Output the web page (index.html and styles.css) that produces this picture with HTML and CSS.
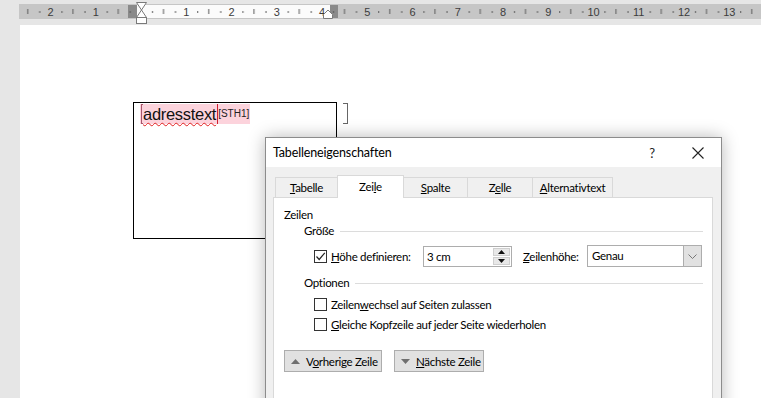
FILE: index.html
```html
<!DOCTYPE html>
<html lang="de">
<head>
    <meta charset="UTF-8">
    <title>Tabelleneigenschaften</title>
    <link rel="stylesheet" href="styles.css">
</head>
<body>
    <div class="ruler">
        <svg width="761" height="25" viewBox="0 0 761 25">
            <defs>
                <pattern id="ticks" x="141" y="0" width="45.25" height="25" patternUnits="userSpaceOnUse">
                    <rect x="11" y="11" width="1" height="2" fill="#5a5a5a"/>
                    <rect x="22" y="9" width="1" height="5" fill="#5a5a5a"/>
                    <rect x="34" y="11" width="1" height="2" fill="#5a5a5a"/>
                </pattern>
            </defs>
            <rect x="19" y="4" width="742" height="15" fill="#c6c6c6"/>
            <rect x="137" y="5" width="193" height="13" fill="#fbfbfb"/>
            <rect x="128" y="5" width="9" height="13" fill="#8a8a8a"/>
            <rect x="330" y="5" width="8" height="13" fill="#8a8a8a"/>
            <rect x="19" y="4" width="742" height="15" fill="url(#ticks)"/>
            <g class="nums" text-anchor="middle">
                <text x="50.5" y="16">2</text>
                <text x="95.75" y="16">1</text>
                <text x="186.25" y="16">1</text>
                <text x="231.5" y="16">2</text>
                <text x="276.75" y="16">3</text>
                <text x="322" y="16">4</text>
                <text x="367.25" y="16">5</text>
                <text x="412.5" y="16">6</text>
                <text x="457.75" y="16">7</text>
                <text x="503" y="16">8</text>
                <text x="548.25" y="16">9</text>
                <text x="593.5" y="16">10</text>
                <text x="638.75" y="16">11</text>
                <text x="684" y="16">12</text>
                <text x="729.25" y="16">13</text>
            </g>
            <g fill="#fff" stroke="#7a7a7a" stroke-width="1">
                <path d="M136.5 2.5 H146.5 L141.5 10 Z"/>
                <path d="M141.5 10 L146.5 17.5 H136.5 Z"/>
                <rect x="136.5" y="17.5" width="10" height="6"/>
                <path d="M323.5 18.5 V14.5 L328 10 L332.5 14.5 V18.5 Z"/>
            </g>
        </svg>
    </div>

    <div class="page">
        <div class="frame">
            <div class="textbox">
                <div class="mark">
                    <span class="open-br"></span>
                    <span class="word">adresstext</span>
                    <span class="cursor"></span>
                    <span class="note">[STH1]</span>
                </div>
            </div>
            <span class="close-br"></span>
        </div>
    </div>

    <div class="dialog">
        <div class="titlebar">
            <span class="title">Tabelleneigenschaften</span>
            <span class="tbtn">?</span>
            <span class="tbtn">
                <svg width="12" height="12" viewBox="0 0 12 12"><path d="M0.5 0.5 L11.5 11.5 M11.5 0.5 L0.5 11.5" stroke="#222" stroke-width="1.1"/></svg>
            </span>
        </div>
        <div class="body">
            <div class="tabs">
                <div class="tab w62"><u>T</u>abelle</div>
                <div class="tab active w66">Zei<u>l</u>e</div>
                <div class="tab w64"><u>S</u>palte</div>
                <div class="tab w65">Z<u>e</u>lle</div>
                <div class="tab w80"><u>A</u>lternativtext</div>
            </div>
            <div class="panel">
                <div class="heading">Zeilen</div>
                <div class="group">Größe</div>
                <div class="ctrl-row">
                    <span class="cb checked">
                        <svg width="11" height="11" viewBox="0 0 11 11"><path d="M1.5 5.5 L4.2 8.5 L9.8 1.8" fill="none" stroke="#222" stroke-width="1.2"/></svg>
                    </span>
                    <span class="lbl-hoehe"><u>H</u>öhe definieren:</span>
                    <span class="num">
                        <span class="num-val">3 cm</span>
                        <span class="spin">
                            <span class="spin-btn"><svg width="7" height="4" viewBox="0 0 7 4"><path d="M0 4 L3.5 0 L7 4 Z" fill="#111"/></svg></span>
                            <span class="spin-btn"><svg width="7" height="4" viewBox="0 0 7 4"><path d="M0 0 L3.5 4 L7 0 Z" fill="#111"/></svg></span>
                        </span>
                    </span>
                    <span class="lbl-zh"><u>Z</u>eilenhöhe:</span>
                    <span class="select">
                        <span class="select-val">Genau</span>
                        <span class="drop"><svg width="9" height="5" viewBox="0 0 9 5"><path d="M0.5 0.5 L4.5 4.5 L8.5 0.5" fill="none" stroke="#777" stroke-width="1"/></svg></span>
                    </span>
                </div>
                <div class="group group-opt">Optionen</div>
                <div class="opt first">
                    <span class="cb"></span>
                    <span>Zeilen<u>w</u>echsel auf Seiten zulassen</span>
                </div>
                <div class="opt">
                    <span class="cb"></span>
                    <span><u>G</u>leiche Kopfzeile auf jeder Seite wiederholen</span>
                </div>
                <div class="buttons">
                    <button class="nav-btn w98">
                        <svg width="9" height="5" viewBox="0 0 9 5"><path d="M0 5 L4.5 0 L9 5 Z" fill="#6f6f6f"/></svg>
                        <span>V<u>o</u>rherige Zeile</span>
                    </button>
                    <button class="nav-btn w90">
                        <svg width="9" height="5" viewBox="0 0 9 5"><path d="M0 0 L4.5 5 L9 0 Z" fill="#6f6f6f"/></svg>
                        <span><u>N</u>ächste Zeile</span>
                    </button>
                </div>
            </div>
        </div>
    </div>
</body>
</html>
```

FILE: styles.css
```css
html, body {
    margin: 0;
    padding: 0;
}
body {
    width: 761px;
    height: 398px;
    overflow: hidden;
    background-color: #e6e6e6;
    position: relative;
}
.ruler {
    height: 25px;
}
.ruler svg {
    display: block;
}
.nums text {
    font-family: 'Liberation Sans', Arial, sans-serif;
    font-size: 11px;
    fill: #3c3c3c;
}
.page {
    margin-left: 20px;
    height: 373px;
    background-color: #fff;
    padding: 77px 0 0 113px;
    box-sizing: border-box;
}
.frame {
    display: flex;
    align-items: flex-start;
}
.textbox {
    width: 204px;
    height: 137px;
    border: 1px solid #000;
    box-sizing: border-box;
    padding: 1px 0 0 6px;
}
.mark {
    display: inline-flex;
    align-items: stretch;
    height: 20px;
    line-height: 20px;
    background-color: #fcd3dc;
    font-family: 'Liberation Sans', Arial, sans-serif;
}
.open-br {
    width: 2px;
    margin-left: 1px;
    border: 1px solid #a8566c;
    border-right: none;
    box-sizing: border-box;
}
.word {
    font-size: 16.5px;
    letter-spacing: -0.3px;
    color: #111;
    text-decoration: underline wavy #e02020;
    text-decoration-thickness: 1px;
    text-underline-offset: 2px;
}
.cursor {
    width: 1px;
    background-color: #d02030;
    margin-left: 1px;
}
.note {
    font-size: 10px;
    color: #222;
    padding-right: 1px;
}
.close-br {
    width: 4px;
    height: 19px;
    margin: 1px 0 0 6px;
    border: 1px solid #666;
    border-left: none;
}

/* dialog */
.dialog {
    position: absolute;
    left: 265px;
    top: 137px;
    width: 457px;
    height: 300px;
    box-sizing: border-box;
    border: 1px solid #8c8c8c;
    background-color: #f0f0f0;
    box-shadow: 0 0 16px rgba(0, 0, 0, 0.28);
    font-family: Lato, 'Noto Sans', sans-serif;
    font-size: 11.5px;
    letter-spacing: -0.3px;
    color: #000;
    white-space: nowrap;
}
.titlebar {
    display: flex;
    align-items: center;
    height: 29px;
    background-color: #fff;
}
.title {
    flex: 1;
    padding-left: 7px;
    font-size: 12.5px;
    letter-spacing: -0.15px;
}
.tbtn {
    width: 46px;
    height: 29px;
    display: flex;
    align-items: center;
    justify-content: center;
    font-size: 13px;
    color: #222;
}
.body {
    padding: 7px 8px 0 7px;
}
.tabs {
    display: flex;
    align-items: flex-end;
    height: 23px;
    padding-left: 2px;
}
.tab {
    height: 20px;
    box-sizing: border-box;
    border: 1px solid #d9d9d9;
    border-bottom: none;
    margin-right: -1px;
    text-align: center;
    line-height: 20px;
    background-color: #f0f0f0;
}
.tab.active {
    height: 23px;
    margin-bottom: -1px;
    background-color: #fff;
    position: relative;
    z-index: 1;
    line-height: 21px;
}
.w62 { width: 63px; }
.w64 { width: 65px; }
.w65 { width: 66px; }
.w66 { width: 67px; }
.w80 { width: 81px; }
.w90 { width: 90px; }
.w98 { width: 98px; }
.panel {
    height: 240px;
    background-color: #fff;
    border: 1px solid #d9d9d9;
    padding: 9px 9px 0 10px;
}
.heading {
    height: 16px;
    line-height: 16px;
}
.group {
    display: flex;
    align-items: center;
    height: 16px;
    line-height: 16px;
    margin-left: 20px;
}
.group::after {
    content: "";
    flex: 1;
    height: 1px;
    margin-left: 6px;
    background-color: #dcdcdc;
}
.group-opt {
    margin-top: 8px;
}
.ctrl-row {
    display: flex;
    align-items: center;
    height: 22px;
    margin: 6px 0 0 30px;
}
.cb {
    width: 13px;
    height: 13px;
    box-sizing: border-box;
    border: 1px solid #333;
    background-color: #fff;
    margin-right: 4px;
    display: flex;
    align-items: center;
    justify-content: center;
    flex: none;
}
.lbl-hoehe {
    width: 92px;
}
.num {
    width: 89px;
    height: 21px;
    box-sizing: border-box;
    border: 1px solid #adadad;
    display: flex;
    align-items: stretch;
}
.num-val {
    flex: 1;
    padding-left: 3px;
    line-height: 19px;
}
.spin {
    width: 17px;
    display: flex;
    flex-direction: column;
    padding: 1px 1px 1px 0;
    gap: 1px;
}
.spin-btn {
    flex: 1;
    background-color: #e8e8e8;
    border: 1px solid #cfcfcf;
    display: flex;
    align-items: center;
    justify-content: center;
}
.lbl-zh {
    width: 64px;
    margin-left: 11px;
}
.select {
    width: 115px;
    height: 22px;
    box-sizing: border-box;
    border: 1px solid #adadad;
    display: flex;
}
.select-val {
    flex: 1;
    padding-left: 4px;
    line-height: 20px;
}
.drop {
    width: 17px;
    background-color: #e1e1e1;
    border-left: 1px solid #adadad;
    display: flex;
    align-items: center;
    justify-content: center;
}
.opt {
    display: flex;
    align-items: center;
    height: 16px;
    margin: 4px 0 0 30px;
}
.opt.first {
    margin-top: 5px;
}
.buttons {
    display: flex;
    gap: 12px;
    margin-top: 18px;
}
.nav-btn {
    height: 22px;
    box-sizing: border-box;
    border: 1px solid #adadad;
    background-color: #e1e1e1;
    font: inherit;
    letter-spacing: inherit;
    color: #000;
    display: flex;
    align-items: center;
    gap: 6px;
    padding: 0 0 0 6px;
}
```
